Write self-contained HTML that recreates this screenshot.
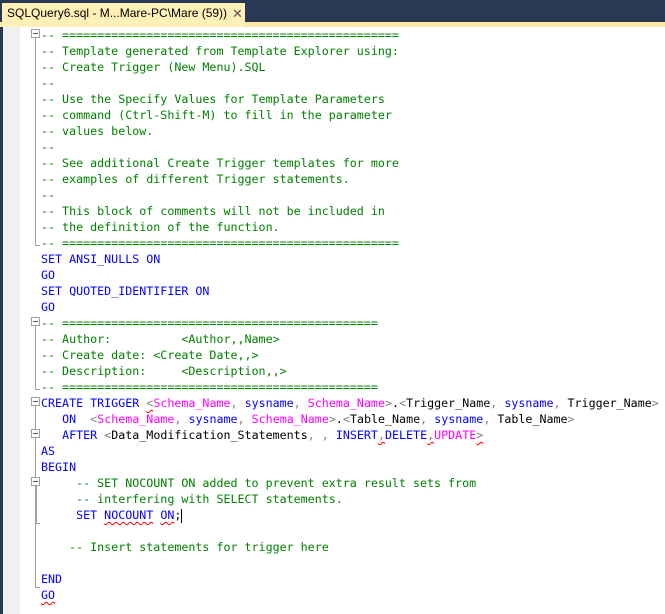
<!DOCTYPE html><html><head><style>
body{margin:0;width:665px;height:614px;overflow:hidden;background:#fff;position:relative;font-family:"Liberation Mono",monospace;}
.top{position:absolute;left:0;top:0;width:665px;height:22px;background:#293955}
.tab{position:absolute;left:2px;top:3px;width:243px;height:24px;background:#fff0b8;font:12px "Liberation Sans",sans-serif;color:#000;line-height:21px;padding-left:5px;box-sizing:border-box;white-space:nowrap}
.tab span{position:absolute;left:230px;top:0;color:#555;font-size:13px}
.strip{position:absolute;left:0;top:22px;width:665px;height:5px;background:#ffe8a6}
.l{position:absolute;left:0;top:27px;width:3px;height:587px;background:#293955}
.g{position:absolute;left:3px;top:27px;width:17px;height:587px;background:#f0f0f0}
pre{position:absolute;left:41px;top:27px;margin:0;font-size:11.67px;line-height:16px;color:#000;white-space:pre}
.c{color:#008000}.k{color:#0000ff}.m{color:#ff00ff}.s{color:#808080}
.sq{text-decoration:underline wavy #f00;text-decoration-thickness:1px;text-underline-offset:2px}
.v{position:absolute;left:35px;width:1px;background:#a0a0a0}
.h{position:absolute;left:35px;width:5px;height:1px;background:#a0a0a0}
.b{position:absolute;left:31px;width:7px;height:7px;border:1px solid #a0a0a0;background:#fff}
.b:after{content:"";position:absolute;left:1px;top:3px;width:5px;height:1px;background:#555}
.cur{position:absolute;left:181px;top:509px;width:1px;height:14px;background:#000}
</style></head><body>
<div class="top"></div><div class="strip"></div>
<div class="tab">SQLQuery6.sql - M...Mare-PC\Mare (59))<span>✕</span></div>
<div class="l"></div><div class="g"></div>
<div class="v" style="top:38px;height:207px"></div><div class="h" style="top:245px"></div>
<div class="b" style="top:29px"></div>
<div class="v" style="top:326px;height:63px"></div><div class="h" style="top:389px"></div>
<div class="b" style="top:317px"></div>
<div class="v" style="top:406px;height:181px"></div><div class="h" style="top:587px"></div>
<div class="b" style="top:397px"></div>
<div class="b" style="top:429px"></div>
<div class="v" style="top:486px;height:37px;left:36px"></div><div class="h" style="top:523px"></div>
<div class="b" style="top:477px"></div>
<pre><span class="c">-- ================================================
-- Template generated from Template Explorer using:
-- Create Trigger (New Menu).SQL
--
-- Use the Specify Values for Template Parameters
-- command (Ctrl-Shift-M) to fill in the parameter
-- values below.
--
-- See additional Create Trigger templates for more
-- examples of different Trigger statements.
--
-- This block of comments will not be included in
-- the definition of the function.
-- ================================================</span>
<span class="k">SET ANSI_NULLS ON</span>
<span class="k">GO</span>
<span class="k">SET QUOTED_IDENTIFIER ON</span>
<span class="k">GO</span>
<span class="c">-- =============================================
-- Author:          &lt;Author,,Name&gt;
-- Create date: &lt;Create Date,,&gt;
-- Description:     &lt;Description,,&gt;
-- =============================================</span>
<span class="k">CREATE TRIGGER</span> <span class="s sq">&lt;</span><span class="m">Schema_Name</span><span class="s">,</span> <span class="k">sysname</span><span class="s">,</span> <span class="m">Schema_Name</span><span class="s">&gt;</span>.<span class="s">&lt;</span>Trigger_Name<span class="s">,</span> <span class="k">sysname</span><span class="s">,</span> Trigger_Name<span class="s">&gt;</span>
   <span class="k">ON</span>  <span class="s">&lt;</span><span class="m">Schema_Name</span><span class="s">,</span> <span class="k">sysname</span><span class="s">,</span> <span class="m">Schema_Name</span><span class="s">&gt;</span>.<span class="s">&lt;</span>Table_Name<span class="s">,</span> <span class="k">sysname</span><span class="s">,</span> Table_Name<span class="s">&gt;</span>
   <span class="k">AFTER</span> <span class="s">&lt;</span>Data_Modification_Statements<span class="s">,</span> <span class="s">,</span> <span class="k">INSERT</span><span class="s sq">,</span><span class="k">DELETE</span><span class="s sq">,</span><span class="m">UPDATE</span><span class="s sq">&gt;</span>
<span class="k">AS</span>
<span class="k">BEGIN</span>
     <span class="c">-- SET NOCOUNT ON added to prevent extra result sets from</span>
     <span class="c">-- interfering with SELECT statements.</span>
     <span class="k">SET <span class="sq">NOCOUNT</span> <span class="sq">ON</span></span>;

    <span class="c">-- Insert statements for trigger here</span>

<span class="k">END</span>
<span class="k sq">GO</span></pre>
<div class="cur"></div>
</body></html>
